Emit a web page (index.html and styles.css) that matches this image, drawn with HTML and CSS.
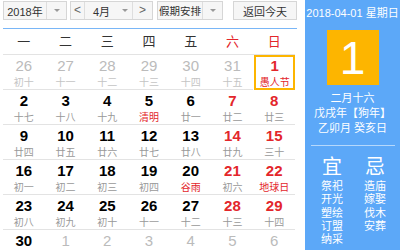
FILE: index.html
```html
<!DOCTYPE html>
<html lang="zh-CN">
<head>
    <meta charset="UTF-8">
    <title>万年历</title>
    <link rel="stylesheet" href="styles.css">
</head>
<body>
    <div class="calendar">
        <div class="main">
            <div class="toolbar">
                <div class="select year">
                    <span class="label">2018年</span>
                    <span class="drop"><i class="caret"></i></span>
                </div>
                <div class="select month">
                    <span class="nav prev">&lt;</span>
                    <span class="label">4月</span>
                    <span class="drop"><i class="caret"></i></span>
                    <span class="nav next">&gt;</span>
                </div>
                <div class="select holiday">
                    <span class="label">假期安排</span>
                    <span class="drop"><i class="caret"></i></span>
                </div>
                <div class="today-btn">返回今天</div>
            </div>

            <div class="week">
                <span>一</span><span>二</span><span>三</span><span>四</span><span>五</span>
                <span class="weekend">六</span><span class="weekend">日</span>
            </div>

            <div class="days">
                <!-- 第一行 -->
                <div class="day other"><b>26</b><small>初十</small></div>
                <div class="day other"><b>27</b><small>十一</small></div>
                <div class="day other"><b>28</b><small>十二</small></div>
                <div class="day other"><b>29</b><small>十三</small></div>
                <div class="day other"><b>30</b><small>十四</small></div>
                <div class="day other"><b>31</b><small>十五</small></div>
                <div class="day weekend festival current"><b>1</b><small>愚人节</small></div>
                <!-- 第二行 -->
                <div class="day"><b>2</b><small>十七</small></div>
                <div class="day"><b>3</b><small>十八</small></div>
                <div class="day"><b>4</b><small>十九</small></div>
                <div class="day festival"><b>5</b><small>清明</small></div>
                <div class="day"><b>6</b><small>廿一</small></div>
                <div class="day weekend"><b>7</b><small>廿二</small></div>
                <div class="day weekend"><b>8</b><small>廿三</small></div>
                <!-- 第三行 -->
                <div class="day"><b>9</b><small>廿四</small></div>
                <div class="day"><b>10</b><small>廿五</small></div>
                <div class="day"><b>11</b><small>廿六</small></div>
                <div class="day"><b>12</b><small>廿七</small></div>
                <div class="day"><b>13</b><small>廿八</small></div>
                <div class="day weekend"><b>14</b><small>廿九</small></div>
                <div class="day weekend"><b>15</b><small>三十</small></div>
                <!-- 第四行 -->
                <div class="day"><b>16</b><small>初一</small></div>
                <div class="day"><b>17</b><small>初二</small></div>
                <div class="day"><b>18</b><small>初三</small></div>
                <div class="day"><b>19</b><small>初四</small></div>
                <div class="day festival"><b>20</b><small>谷雨</small></div>
                <div class="day weekend"><b>21</b><small>初六</small></div>
                <div class="day weekend festival"><b>22</b><small>地球日</small></div>
                <!-- 第五行 -->
                <div class="day"><b>23</b><small>初八</small></div>
                <div class="day"><b>24</b><small>初九</small></div>
                <div class="day"><b>25</b><small>初十</small></div>
                <div class="day"><b>26</b><small>十一</small></div>
                <div class="day"><b>27</b><small>十二</small></div>
                <div class="day weekend"><b>28</b><small>十三</small></div>
                <div class="day weekend"><b>29</b><small>十四</small></div>
                <!-- 第六行（下方被裁切） -->
                <div class="day"><b>30</b></div>
                <div class="day other"><b>1</b></div>
                <div class="day other"><b>2</b></div>
                <div class="day other"><b>3</b></div>
                <div class="day other"><b>4</b></div>
                <div class="day other"><b>5</b></div>
                <div class="day other"><b>6</b></div>
            </div>
        </div>

        <div class="detail">
            <div class="detail-date">2018-04-01 星期日</div>
            <div class="detail-day">1</div>
            <div class="detail-lunar">
                <div>二月十六</div>
                <div>戊戌年【狗年】</div>
                <div>乙卯月 癸亥日</div>
            </div>
            <div class="detail-line"></div>
            <div class="almanac">
                <div class="almanac-col">
                    <div class="almanac-title">宜</div>
                    <div>祭祀</div>
                    <div>开光</div>
                    <div>塑绘</div>
                    <div>订盟</div>
                    <div>纳采</div>
                </div>
                <div class="almanac-col">
                    <div class="almanac-title">忌</div>
                    <div>造庙</div>
                    <div>嫁娶</div>
                    <div>伐木</div>
                    <div>安葬</div>
                </div>
            </div>
        </div>
    </div>
</body>
</html>
```

FILE: styles.css
```css
:root {
    --blue: #5ca8f8;
    --orange: #fdb500;
    --red: #e3262b;
    --line: #e3e3e3;
}

body {
    margin: 0;
    width: 400px;
    height: 250px;
    overflow: hidden;
    background: #fff;
    font-family: "Liberation Sans", "Noto Sans CJK SC", sans-serif;
    color: #333;
}

.calendar {
    display: flex;
    height: 250px;
}

.main {
    width: 294px;
    height: 250px;
    overflow: hidden;
    padding-left: 3px;
}

/* 顶部工具栏 */
.toolbar {
    display: flex;
    align-items: flex-start;
    height: 29px;
    padding-top: 1px;
    box-sizing: border-box;
    border-bottom: 1px solid #79b6f7;
}

.select,
.today-btn {
    display: flex;
    align-items: center;
    height: 19px;
    box-sizing: border-box;
    border: 1px solid #d6d6d6;
    background: #f6f6f6;
    font-size: 11px;
    white-space: nowrap;
    color: #333;
}

.select .label {
    flex: 1;
    text-align: center;
}

.select .drop {
    width: 19px;
    height: 100%;
    border-left: 1px solid #dedede;
    display: flex;
    align-items: center;
    justify-content: center;
}

.caret {
    width: 0;
    height: 0;
    border-left: 3px solid transparent;
    border-right: 3px solid transparent;
    border-top: 3px solid #999;
}

.year {
    width: 64px;
}

.month {
    width: 83px;
    margin-left: 3px;
}

.month .nav {
    width: 13px;
    height: 100%;
    line-height: 17px;
    text-align: center;
    font-size: 12px;
    color: #666;
}

.month .prev {
    border-right: 1px solid #dedede;
}

.month .next {
    width: 19px;
    border-left: 1px solid #dedede;
}

.month .drop {
    border-left: none;
    width: 14px;
}

.holiday {
    width: 66px;
    margin-left: 4px;
}

.holiday .label {
    font-size: 10.5px;
}

.today-btn {
    width: 64px;
    margin-left: 10px;
    justify-content: center;
}

/* 星期 */
.week {
    display: grid;
    grid-template-columns: repeat(7, 1fr);
    width: 292px;
    height: 25px;
    line-height: 25px;
    border-bottom: 1px solid var(--line);
    text-align: center;
    font-size: 13px;
}

.week .weekend {
    color: var(--red);
}

/* 日期格子 */
.days {
    display: grid;
    grid-template-columns: repeat(7, 1fr);
    grid-auto-rows: 35px;
    width: 292px;
}

.day {
    display: flex;
    flex-direction: column;
    align-items: center;
    padding-top: 2px;
    box-sizing: border-box;
    border-bottom: 1px solid var(--line);
}

.day b {
    font-size: 15px;
    line-height: 18px;
    color: #000;
}

.day small {
    font-size: 10px;
    line-height: 15px;
    color: #999;
}

.day.weekend b {
    color: var(--red);
}

.day.festival small {
    color: var(--red);
}

.day.other b {
    font-weight: normal;
    color: #bbb;
}

.day.other small {
    color: #c4c4c4;
}

.day.current {
    border: 2px solid var(--orange);
    margin-left: 1px;
    padding-top: 0;
}

/* 右侧详情 */
.detail {
    width: 95px;
    margin-left: 8px;
    background: var(--blue);
    color: #fff;
    display: flex;
    flex-direction: column;
    align-items: center;
}

.detail-date {
    margin-top: 6px;
    font-size: 11px;
    line-height: 14px;
}

.detail-day {
    width: 52px;
    height: 55px;
    margin-top: 10px;
    background: var(--orange);
    font-size: 46px;
    line-height: 56px;
    text-align: center;
}

.detail-lunar {
    margin-top: 6px;
    font-size: 11px;
    line-height: 15px;
    text-align: center;
}

.detail-line {
    width: 84px;
    height: 1px;
    margin-top: 9px;
    background: rgba(255,255,255,0.55);
}

.almanac {
    display: flex;
    width: 86px;
    margin-top: 9px;
    margin-left: 2px;
}

.almanac-col {
    flex: 1;
    text-align: center;
    font-size: 11px;
    line-height: 13.3px;
}

.almanac-title {
    font-size: 20px;
    line-height: 24px;
    margin-bottom: 1px;
}
```
